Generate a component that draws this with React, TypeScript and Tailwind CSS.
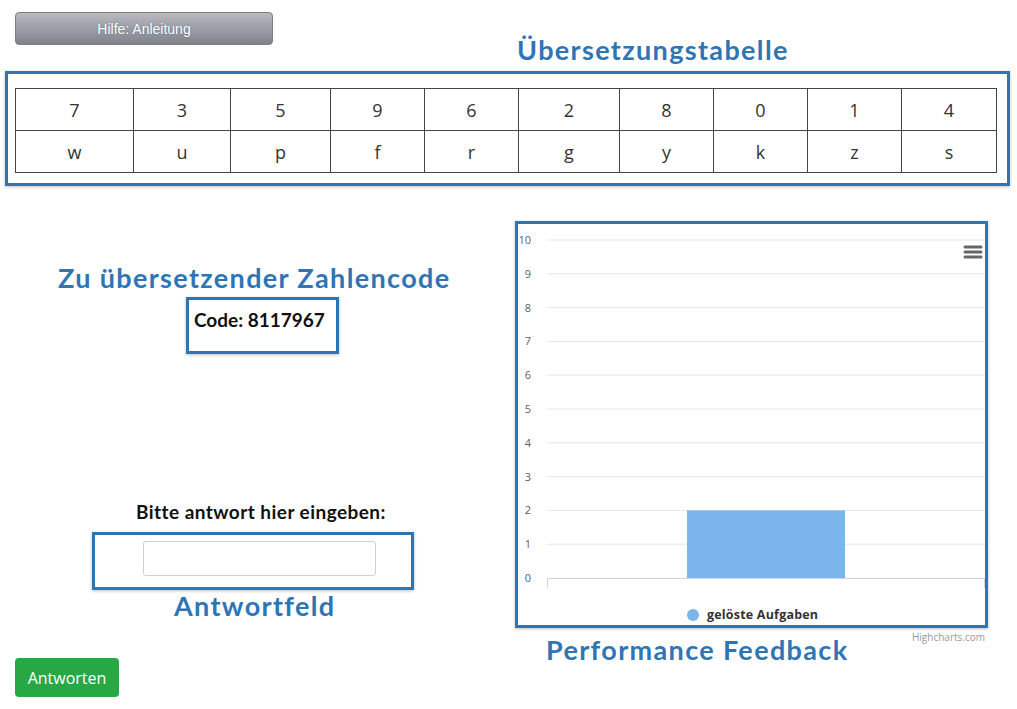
import React from "react";

const top = ["7", "3", "5", "9", "6", "2", "8", "0", "1", "4"];
const bottom = ["w", "u", "p", "f", "r", "g", "y", "k", "z", "s"];
const widths = [118, 97, 100, 94, 94, 101, 94, 94, 94, 95];

function Chart() {
  const base = 354;
  const step = 33.8;
  const ticks = Array.from({ length: 11 }, (_, i) => i);
  return (
    <svg width="467" height="401" viewBox="0 0 467 401" className="block">
      {ticks.map((i) => {
        const y = base - i * step;
        return (
          <g key={i}>
            {i > 0 && <line x1="29" x2="467" y1={y} y2={y} stroke="#e6e6e6" strokeWidth="1" />}
            <text
              x="13"
              y={y + 4}
              textAnchor="end"
              fontSize="11"
              fill="#606060"
              fontFamily="'Open Sans', sans-serif"
            >
              {i}
            </text>
          </g>
        );
      })}
      <rect x="169" y={base - 2 * step} width="158" height={2 * step} fill="#7cb5ec" />
      <line x1="29" x2="467" y1={base + 0.5} y2={base + 0.5} stroke="#ccd6eb" strokeWidth="1" />
      <line x1="29.5" x2="29.5" y1={base} y2={base + 10} stroke="#ccd6eb" strokeWidth="1" />
      <line x1="466.5" x2="466.5" y1={base} y2={base + 10} stroke="#ccd6eb" strokeWidth="1" />
      <g stroke="#666666" strokeWidth="3" strokeLinecap="round">
        <line x1="447" x2="463" y1="23" y2="23" />
        <line x1="447" x2="463" y1="28" y2="28" />
        <line x1="447" x2="463" y1="33" y2="33" />
      </g>
      <circle cx="175" cy="391" r="6" fill="#7cb5ec" />
      <text
        x="189"
        y="395"
        fontSize="12.5"
        fontWeight="700"
        fill="#333333"
        letterSpacing="0.2"
        fontFamily="'Open Sans', sans-serif"
      >
        gelöste Aufgaben
      </text>
    </svg>
  );
}

export default function App() {
  const anno =
    "font-['Lato',sans-serif] font-bold text-[#2e75b6] text-[27px] leading-[30px] tracking-[1.35px] whitespace-nowrap";
  const box = "border-[3px] border-[#2e75b6] shadow-[0_1px_3px_rgba(0,0,0,0.25)]";
  return (
    <div className="w-[1017px] h-[709px] bg-white flex flex-col overflow-hidden">
      <div className="flex h-[71px] items-start">
        <button className="mt-[12px] ml-[15px] w-[258px] h-[33px] pt-[2px] rounded-[4px] border border-[#7a7d84] bg-gradient-to-b from-[#b9bbc1] to-[#80838b] text-white text-[14px] font-['Liberation_Sans',Arial,sans-serif] [text-shadow:0_0_2px_rgba(60,80,120,0.6)]">
          Hilfe: Anleitung
        </button>
        <div className={`${anno} ml-[244px] mt-[35px]`}>Übersetzungstabelle</div>
      </div>

      <div className={`${box} ml-[5px] w-[1005px] h-[115px] pl-[7px] pt-[14px]`}>
        <table className="border-collapse font-['Open_Sans',sans-serif] text-[18px] text-[#333]">
          <tbody>
            {[top, bottom].map((row, r) => (
              <tr key={r} className="h-[42px]">
                {row.map((c, i) => (
                  <td
                    key={i}
                    style={{ width: widths[i] }}
                    className="border border-[#444] text-center align-middle p-0 leading-[20px]"
                  >
                    {c}
                  </td>
                ))}
              </tr>
            ))}
          </tbody>
        </table>
      </div>

      <div className="flex flex-1">
        <div className="w-[515px] flex flex-col">
          <div className={`${anno} ml-[58px] mt-[77px]`}>Zu übersetzender Zahlencode</div>
          <div className={`${box} ml-[186px] mt-[4px] w-[153px] h-[57px] pl-[5px] pt-[9px]`}>
            <span className="font-['Lato',sans-serif] font-bold text-[19px] leading-[22px] text-[#111] whitespace-nowrap">
              Code: 8117967
            </span>
          </div>
          <div className="ml-[136px] mt-[146px] font-['Lato',sans-serif] font-bold text-[19px] leading-[24px] tracking-[0.45px] text-[#111] whitespace-nowrap">
            Bitte antwort hier eingeben:
          </div>
          <div className={`${box} ml-[92px] mt-[8px] w-[322px] h-[58px] pl-[48px] pt-[6px]`}>
            <input className="w-[233px] h-[35px] border border-[#cfcfd4] rounded-[3px] bg-white outline-none" />
          </div>
          <div className={`${anno} ml-[174px] mt-[1px]`}>Antwortfeld</div>
          <button className="ml-[15px] mt-[37px] w-[104px] h-[39px] rounded-[4px] bg-[#28a745] text-white text-[16px] font-['Open_Sans',sans-serif]">
            Antworten
          </button>
        </div>
        <div className="flex flex-col">
          <div className={`${box} mt-[35px] w-[473px] h-[407px] bg-white`}>
            <Chart />
          </div>
          <div className="flex items-start justify-between w-[470px]">
            <div className={`${anno} ml-[31px] mt-[7px]`}>Performance Feedback</div>
            <div className="mt-[3px] text-[10px] leading-[12px] text-[#999] font-['Open_Sans',sans-serif]">
              Highcharts.com
            </div>
          </div>
        </div>
      </div>
    </div>
  );
}
